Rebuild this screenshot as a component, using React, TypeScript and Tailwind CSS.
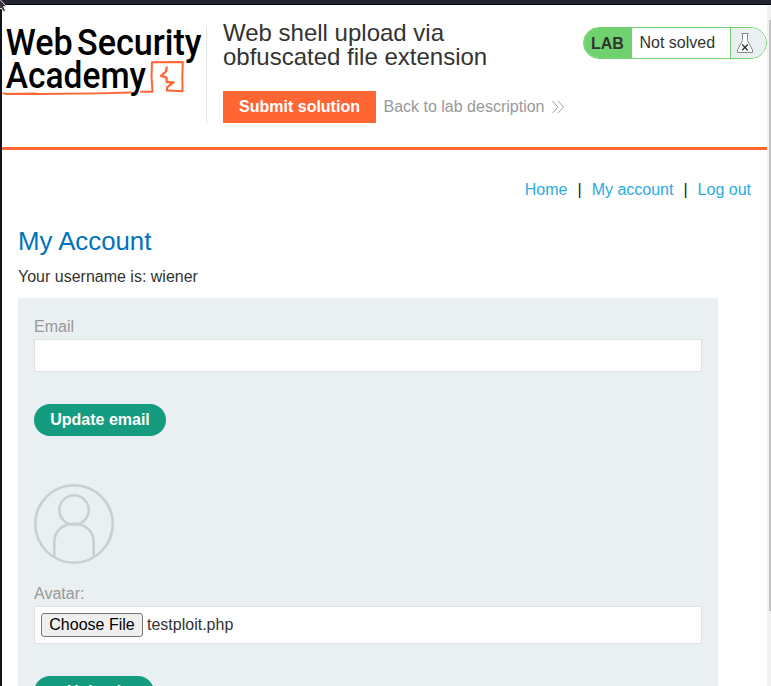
function Logo() {
  return (
    <svg className="block h-[76px] w-[204px] shrink-0 overflow-visible" viewBox="2 24 204 76" aria-label="Web Security Academy">
      <g fill="#000" fontFamily="Roboto, sans-serif" fontWeight="500" fontSize="37">
        <text x="5.8" y="55" textLength="67" lengthAdjust="spacingAndGlyphs">Web</text>
        <text x="77" y="55" textLength="124.5" lengthAdjust="spacingAndGlyphs">Security</text>
        <text x="5.8" y="88" textLength="140.2" lengthAdjust="spacingAndGlyphs">Academy</text>
      </g>
      <g fill="none" stroke="#ff6633" strokeLinejoin="round" strokeLinecap="round">
        <path d="M3 93.3L10 94.2L36 94L100 93.3L131 92.5" strokeWidth="1.8" />
        <path d="M6 94L36 93.6M141 91.8L152.5 91.8L151.5 76L152 62.3L182.8 62L182.3 77L182.6 91.2L167.5 90.6" strokeWidth="2" />
        <path d="M166.7 67.3L166 71.5L161 75.8L166.5 77.6L166.7 82L173.5 82.4L167 87.3L167 90.4" strokeWidth="2.3" />
      </g>
    </svg>
  );
}

function Flask() {
  return (
    <svg className="ml-[6px] mt-[5px] h-5 w-4" viewBox="0 0 16 20" fill="none">
      <path d="M5.5 1V7.5L.5 17V19.5H15.5V17L10.5 7.5V1" fill="#fff" stroke="#888" />
      <path d="M4.5 .5H11.5" stroke="#888" />
      <path d="M5.2 11.5L10.8 17.3M10.8 11.5L5.2 17.3" stroke="#333" strokeWidth="1.3" />
    </svg>
  );
}

function Avatar() {
  return (
    <svg className="mt-12 block h-20 w-20" viewBox="0 0 80 80" fill="none" stroke="#c9d0d0" strokeWidth="2.6">
      <circle cx="40" cy="40" r="38.7" />
      <circle cx="40" cy="26" r="14.7" />
      <path d="M20.3 73V58C20.3 47 29 39.7 40 39.7S59.7 47 59.7 58V73" />
    </svg>
  );
}

function Pointer() {
  return (
    <svg className="absolute left-0 top-0 h-[13px] w-2" viewBox="0 0 8 13">
      <path d="M-1 -1.5L6.5 6.5H3.5L5.5 10.5L3.5 11.7L1.3 8L-1 9.5Z" fill="#3a343a" stroke="#e8e4e8" strokeWidth="1" />
    </svg>
  );
}

export default function App() {
  return (
    <div className="relative h-[686px] w-[771px] overflow-hidden bg-[#10121d] pl-[2px] font-['Liberation_Sans',Arial,sans-serif] text-base leading-6 text-[#333332]">
      <div className="-ml-[2px] h-[5px] border-b border-[#05070c] bg-[#222430]" />
      <div className="flex h-[681px] bg-white">
        <div className="w-[765px] shrink-0">
          <header className="flex h-[145px] border-b-3 border-[#ff6633]">
            <div className="mt-[19px]"><Logo /></div>
            <div className="mt-[22px] h-24 w-px shrink-0 bg-[#e2e2e2]" />
            <div className="ml-4 mt-4 w-[350px] shrink-0">
              <h2 className="w-[300px] text-2xl leading-6">Web shell upload via obfuscated file extension</h2>
              <div className="mt-[22px] flex items-center">
                <button className="h-8 w-[153px] bg-[#ff6633] font-bold text-white">Submit solution</button>
                <a className="ml-[7.5px] flex items-center whitespace-nowrap text-[#999]">
                  Back to lab description
                  <svg className="-mt-px ml-2 h-3 w-3" viewBox="0 0 12 12" fill="none" stroke="#999" strokeWidth="0.9">
                    <path d="M.5 0L6 6L.5 12M6 0L11.5 6L6 12" />
                  </svg>
                </a>
              </div>
            </div>
            <div className="ml-[10px] mt-[22px] flex h-8 w-[184px] shrink-0 overflow-hidden rounded-full border border-[#70d26e] bg-white">
              <div className="w-12 bg-[#70d26e] pl-[7px] pt-1 font-bold">LAB</div>
              <div className="w-[98px] pl-[7.5px] pt-[3px]">Not solved</div>
              <div className="grow border-l border-[#70d26e] bg-[#eaeff2]"><Flask /></div>
            </div>
          </header>
          <nav className="mr-4 mt-7 flex justify-end text-[#29abe2]">
            <a>Home</a>
            <span className="mx-[10px] text-[#222]">|</span>
            <a>My account</a>
            <span className="mx-[10px] text-[#222]">|</span>
            <a>Log out</a>
          </nav>
          <main className="ml-4 mt-[23px] w-[700px]">
            <h1 className="text-[25.8px] leading-8 text-[#0072bc]">My Account</h1>
            <p className="mt-2">Your username is: wiener</p>
            <section className="mt-[9px] h-[420px] bg-[#eaeff2] px-4 pt-[17px]">
              <label className="block text-[#999]">Email</label>
              <div className="h-[33px] border border-[#e2e2e2] bg-white" />
              <button className="mt-8 block h-8 w-[132px] rounded-full bg-[#159c80] font-bold text-white">Update email</button>
              <Avatar />
              <label className="mt-[18px] block text-[#999]">Avatar:</label>
              <div className="flex h-[38px] items-center border border-[#e2e2e2] bg-white px-[6px]">
                <button className="h-6 w-[102px] rounded-[3px] border border-[#767676] bg-[#efefef] leading-[22px] text-black">Choose File</button>
                <span className="ml-1">testploit.php</span>
              </div>
              <button className="mt-8 block h-8 w-[120px] rounded-full bg-[#159c80] font-bold text-white">Upload</button>
            </section>
          </main>
        </div>
        <div className="h-full w-1 shrink-0 bg-[#f0f0f0] pl-[2px] pt-[15px]">
          <div className="h-[591px] bg-[#c1c1c1]" />
        </div>
      </div>
      <Pointer />
    </div>
  );
}
